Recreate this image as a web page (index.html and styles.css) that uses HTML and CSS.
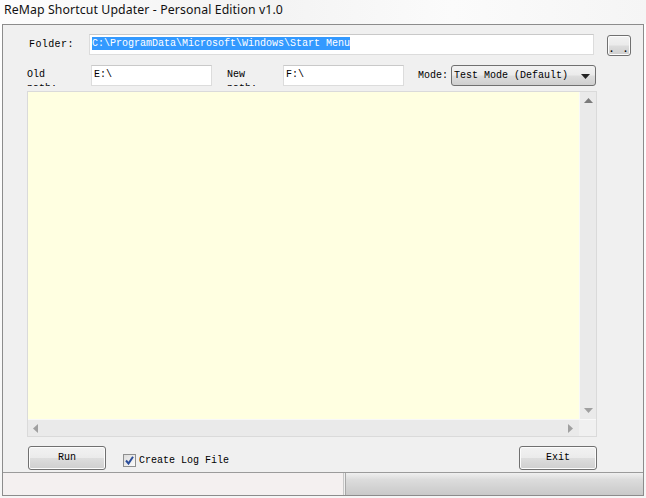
FILE: index.html
```html
<!DOCTYPE html>
<html>
<head>
<meta charset="utf-8">
<link rel="stylesheet" href="styles.css">
</head>
<body>
<div class="titlebar">ReMap Shortcut Updater - Personal Edition v1.0</div>
<div class="window">
  <div class="row row1">
    <div class="lbl lbl-folder">Folder:</div>
    <div class="input input-folder"><span class="sel">C:\ProgramData\Microsoft\Windows\Start Menu</span></div>
    <div class="btn btn-browse"><span class="dots">. .</span></div>
  </div>
  <div class="row row2">
    <div class="lbl lbl-two">Old<br>path:</div>
    <div class="input input-small">E:\</div>
    <div class="lbl lbl-two lbl-new">New<br>path:</div>
    <div class="input input-small">F:\</div>
    <div class="lbl lbl-mode">Mode:</div>
    <div class="select">
      <span>Test Mode (Default)</span>
      <svg class="caret" width="9" height="5" viewBox="0 0 9 5"><path d="M0 0h9L4.5 5z" fill="#222"/></svg>
    </div>
  </div>
  <div class="log">
    <div class="log-main">
      <div class="log-text"></div>
      <div class="vscroll">
        <svg width="9" height="5" viewBox="0 0 9 5"><path d="M4.5 0L9 5H0z" fill="#7b7b7b"/></svg>
        <svg width="9" height="5" viewBox="0 0 9 5"><path d="M0 0h9L4.5 5z" fill="#a0a0a0"/></svg>
      </div>
    </div>
    <div class="hscroll">
      <div class="hbar">
        <svg width="5" height="9" viewBox="0 0 5 9"><path d="M5 0v9L0 4.5z" fill="#a0a0a0"/></svg>
        <svg width="5" height="9" viewBox="0 0 5 9"><path d="M0 0v9L5 4.5z" fill="#a0a0a0"/></svg>
      </div>
      <div class="corner"></div>
    </div>
  </div>
  <div class="row row3">
    <div class="btn btn-run">Run</div>
    <label class="check">
      <span class="box"><svg width="9" height="9" viewBox="0 0 9 9"><path d="M1 4.5l2.5 3L8 0.8" stroke="#2a4d9a" stroke-width="2" fill="none"/></svg></span>
      <span>Create Log File</span>
    </label>
    <div class="spacer"></div>
    <div class="btn btn-exit">Exit</div>
  </div>
  <div class="statusbar">
    <div class="panel panel-left"></div>
    <div class="panel panel-right"></div>
  </div>
</div>
</body>
</html>
```

FILE: styles.css
```css
html, body {
  margin: 0;
  padding: 0;
}
body {
  width: 646px;
  height: 498px;
  overflow: hidden;
  background: linear-gradient(180deg, #ffffff 0%, #f6f6f6 100%);
  font-family: "Liberation Mono", "DejaVu Sans Mono", monospace;
  font-size: 10px;
  color: #000;
}
.titlebar {
  height: 24px;
  padding-left: 4px;
  line-height: 20px;
  font-family: "Noto Sans", "Open Sans", sans-serif;
  font-size: 12.3px;
  letter-spacing: 0.1px;
  color: #111;
  background: linear-gradient(90deg, #fdfdfd 0%, #f3f3f3 40%, #fbfbfb 70%, #f5f5f5 100%);
}
.window {
  margin-left: 2px;
  width: 640px;
  height: 470px;
  border: 1px solid #8c8c8c;
  background: #f0f0f0;
  display: flex;
  flex-direction: column;
}
.row {
  display: flex;
  align-items: flex-start;
}
.row1 {
  margin-top: 9px;
  padding-left: 24px;
}
.lbl {
  line-height: 12px;
  font-size: 10px;
}
.lbl-folder {
  width: 60px;
  padding-left: 2px;
  padding-top: 5px;
  letter-spacing: 0.4px;
}
.input {
  background: #fff;
  border: 1px solid #dcdcdc;
  border-top-color: #c9c9c9;
  box-sizing: border-box;
  height: 21px;
  line-height: 12px;
  padding: 3px 2px 0 2px;
  white-space: nowrap;
  overflow: hidden;
}
.input-folder {
  width: 505px;
}
.sel {
  background: #3399ff;
  color: #fff;
  padding: 1px 0;
}
.btn {
  box-sizing: border-box;
  border: 1px solid #707070;
  border-radius: 3px;
  background: linear-gradient(180deg, #f2f2f2 0%, #ebebeb 48%, #dddddd 52%, #cfcfcf 100%);
  box-shadow: inset 0 0 0 1px #fcfcfc;
  text-align: center;
  font-size: 10px;
}
.btn-browse {
  margin-left: 13px;
  margin-top: 1px;
  width: 24px;
  height: 21px;
}
.dots {
  display: block;
  padding-top: 8px;
  font-weight: bold;
  letter-spacing: 1px;
}
.row2 {
  margin-top: 9px;
  padding-left: 24px;
}
.lbl-two {
  width: 64px;
  box-sizing: border-box;
  height: 21px;
  overflow: hidden;
  padding-top: 3px;
  line-height: 14px;
}
.input-small {
  width: 121px;
}
.lbl-new {
  margin-left: 15px;
  width: 56px;
}
.lbl-mode {
  margin-left: 14px;
  width: 33px;
  padding-top: 5px;
}
.select {
  box-sizing: border-box;
  width: 145px;
  height: 21px;
  border: 1px solid #707070;
  border-radius: 3px;
  background: linear-gradient(180deg, #f2f2f2 0%, #ebebeb 48%, #dddddd 52%, #cfcfcf 100%);
  display: flex;
  align-items: center;
  justify-content: space-between;
  padding: 1px 5px 0 2px;
  line-height: 12px;
}
.log {
  margin-top: 5px;
  margin-left: 24px;
  width: 570px;
  height: 346px;
  box-sizing: border-box;
  border: 1px solid #dadada;
  display: flex;
  flex-direction: column;
}
.log-main {
  flex: 1;
  display: flex;
}
.log-text {
  flex: 1;
  background: #ffffe1;
}
.vscroll {
  width: 17px;
  background: #eaeaea;
  border-left: 1px solid #f8f8f8;
  display: flex;
  flex-direction: column;
  align-items: center;
  justify-content: space-between;
  padding: 6px 0 6px 0;
  box-sizing: border-box;
}
.hscroll {
  height: 16px;
  display: flex;
  background: #eaeaea;
  border-top: 1px solid #f8f8f8;
}
.hbar {
  flex: 1;
  display: flex;
  align-items: center;
  justify-content: space-between;
  padding: 0 6px 0 5px;
}
.corner {
  width: 17px;
  background: #f0f0f0;
}
.row3 {
  margin-top: 9px;
  padding-left: 25px;
  align-items: center;
  height: 24px;
}
.btn-run, .btn-exit {
  width: 78px;
  height: 24px;
  line-height: 21px;
}
.check {
  margin-left: 17px;
  display: flex;
  align-items: center;
  padding-top: 4px;
}
.box {
  width: 11px;
  height: 11px;
  border: 1px solid #8e8f8f;
  background: linear-gradient(135deg, #dcdcdc, #fbfbfb);
  display: flex;
  align-items: center;
  justify-content: center;
  margin-right: 3px;
}
.spacer {
  flex: 1;
}
.btn-exit {
  margin-right: 46px;
}
.statusbar {
  margin-top: auto;
  height: 22px;
  border-top: 1px solid #9b9b9b;
  display: flex;
}
.panel-left {
  width: 340px;
  background: #f4f0f0;
  border-right: 1px solid #c8c8c8;
}
.panel-right {
  flex: 1;
  margin-left: 1px;
  border-left: 1px solid #a8a8a8;
  background: linear-gradient(180deg, #f0f0f0 0%, #dcdcdc 30%, #c9c9c9 100%);
}
```
